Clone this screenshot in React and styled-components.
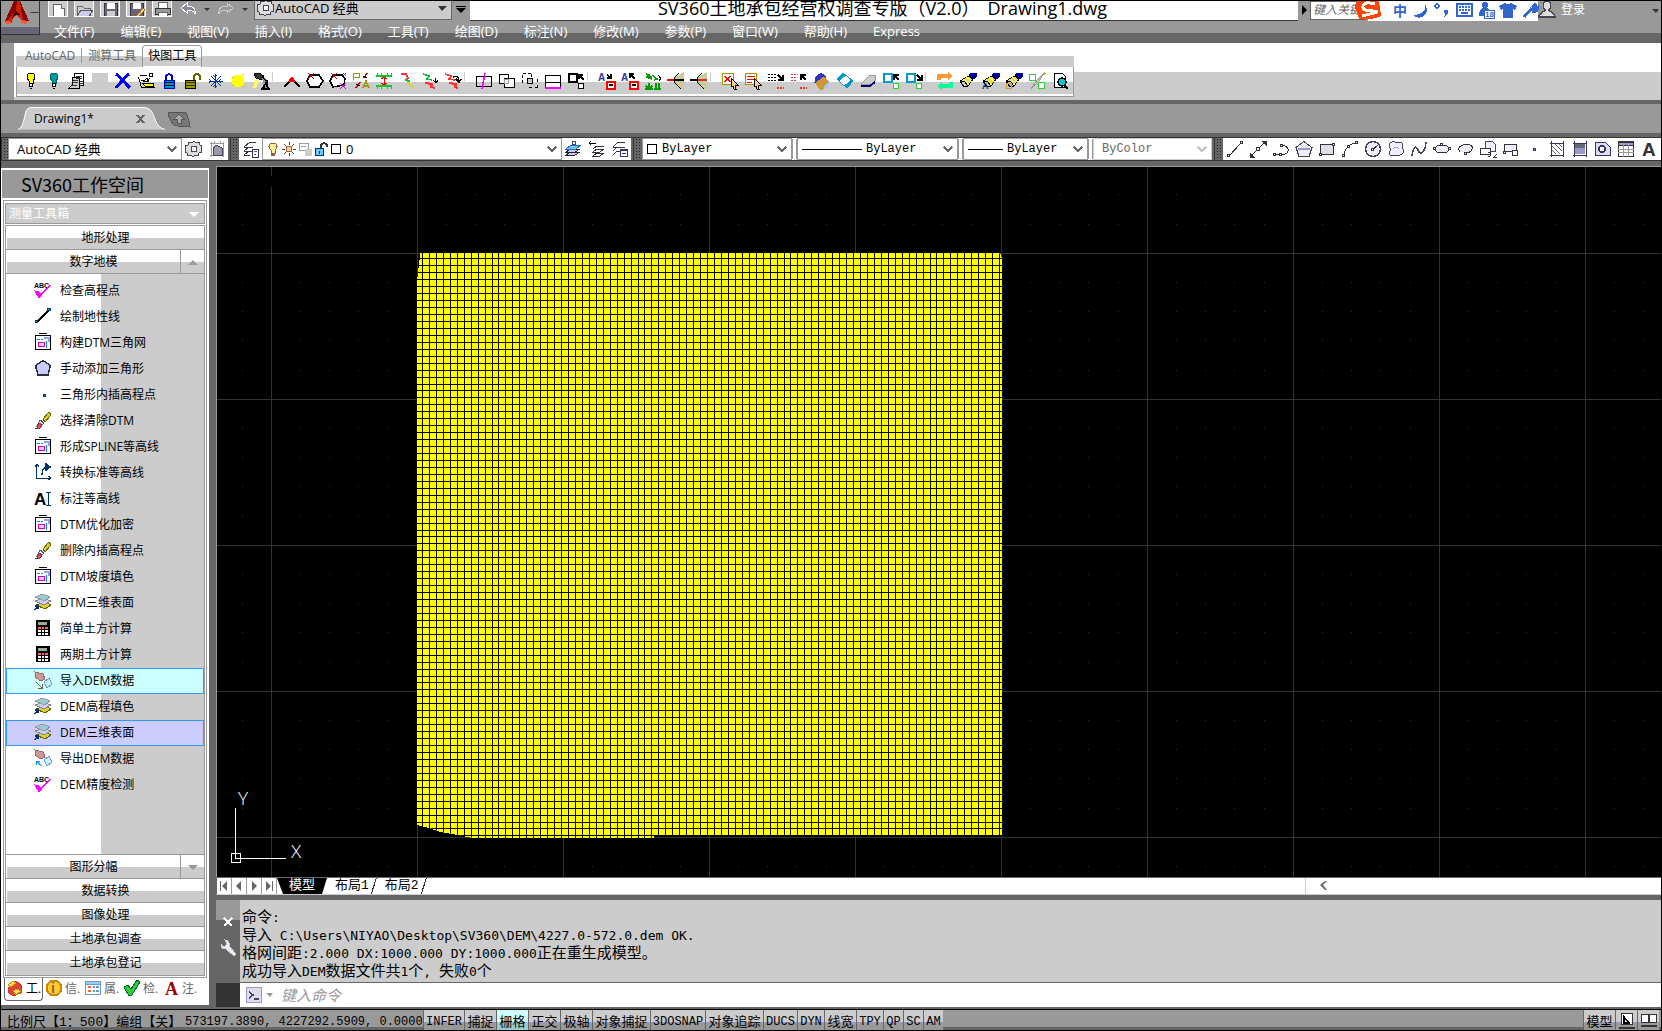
import { Fragment } from 'react';
import styled, { createGlobalStyle } from 'styled-components';

const UI = '"Open Sans", "Noto Sans CJK SC", sans-serif';
const MONO = '"Liberation Mono", "Noto Sans CJK SC", monospace';

const GlobalStyle = createGlobalStyle`
  * {
    box-sizing: border-box;
  }
  body {
    margin: 0;
    background: #000;
    font-family: ${UI};
    font-size: 12px;
    color: #000;
  }
  button, select, input {
    font: inherit;
    color: inherit;
    margin: 0;
    padding: 0;
    border: none;
    border-radius: 0;
    background: none;
  }
  select {
    appearance: none;
    outline: none;
  }
  svg {
    display: block;
    flex: none;
  }
`;

/* ---------- icons ---------- */

// every icon is a list of [d, stroke, fill, strokeWidth] or { t, x, y, s, c }
const page = [['M3.5 1.5h8l3 3v11h-11z', '#000', '#fff']];
const brush = [
  ['M12 1h5v4l-3 2-4-3z', '#009', '#009'],
  ['M10 4l4 3-5 7-4 1-4-6z', '#000', '#ccc'],
  ['M8 5l4 5M5 7l4 6', '#ff0', 'none', 2],
  ['M1 9h4l4 5', '#000'],
];

const icons = {
  newFile: [['M4 3h8l3 3v12H4z', '#666', '#fff'], ['M12 3v4h4', '#666', '#ccc']],
  open: [['M2 5h5l2 2h6v8H2z', '#666', '#ccc'], ['M2 15l4-6h12l-4 6z', '#556', '#cce']],
  save: [['M3 2h13v13H3z', '#334', '#667'], ['M6 2h7v5H6z', '#fff', '#fff'], ['M6 10h7v5H6z', '#ccc', '#ccc']],
  saveAs: [['M3 2h13v13H3z', '#334', '#667'], ['M6 2h7v5H6z', '#fff', '#fff'], ['M9 15l7-8 2 2-7 7z', '#963', '#fc6']],
  print: [['M5 1h9v6H5z', '#666', '#fff'], ['M2 7h15v6H2z', '#333', '#999'], ['M5 11h9v5H5z', '#666', '#fff']],
  undo: [['M2 7l6-5v3c5 0 9 2 8 8-1-3-4-4-8-4v3z', '#fff', '#889']],
  redo: [['M16 7l-6-5v3c-5 0-9 2-8 8 1-3 4-4 8-4v3z', '#ccc', '#999']],
  gear: [
    ['M9 1l2 2 3-1 1 3 2 1-1 3 1 3-3 1-1 3-3-1-2 2-2-2-3 1-1-3-2-1 1-3-1-3 3-1 1-3 3 1z', '#445', '#ddd'],
    ['M9 6a3 3 0 1 1 0 6a3 3 0 1 1 0-6', '#445', '#fff'],
  ],
  workspace: [['M2 3.500h14M2 15.500h14M3.500 2v15M15.500 2v15M6.500 1v3M12.500 1v3', '#999'], ['M5 9l3-4 6 3v7H5z', '#445', '#99a']],
  bulbOn: [['M9 1c5 0 5 5 2 8v2H7V9C4 6 4 1 9 1z', '#000', '#ff0'], ['M7.500 11.500h3v3h-3z', '#000', '#fff'], ['M8 16.500h2', '#000']],
  bulbOff: [['M9 1c5 0 5 5 2 8v2H7V9C4 6 4 1 9 1z', '#066', '#099'], ['M7.500 11.500h3v3h-3z', '#000', '#fff'], ['M8 16.500h2', '#000']],
  sheets: [
    ['M6.500 1.500h9v12h-9z', '#000', '#fff'],
    ['M4 5h7v11H1l3-3z', '#000', '#ccc'],
    ['M8 4.500h6M8 6.500h6M5 8.500h5M5 10.500h5M4 13.500h5M12 9.500h3M12 11.500h3', '#333'],
  ],
  blank: [['M1 1h16v10H1z', 'none', '#ccc']],
  cross: [['M2 2c4 3 8 8 14 14M15 2C10 6 6 11 2 16', '#00f', 'none', 3]],
  thaw: [
    ['M1.500 5l3 10.500h13M3 3.500h7M4 8l5 2M10 6l-3 3h4z', '#000'],
    ['M5 11l3 3h8v-3z', '#000', '#ff0'],
    ['M14 1a2 2 0 1 1 0 4a2 2 0 1 1 0-4', '#000', '#fff'],
    ['M13 6l-3 4', '#000'],
  ],
  lock: [['M6 8V4q3-4 6 0v4', '#00c', 'none', 1.5], ['M4 8h10v8H4z', '#00c', '#099'], ['M4 10.500h10M4 13.500h10', '#006']],
  unlock: [['M11 9V4q3-4 6 0v4', '#660', 'none', 2], ['M2 8h10v8H2z', '#000', '#990'], ['M2 10.500h10M2 13.500h10', '#330']],
  freeze: [['M9.500 2v14M3 9.500h14M5 4l10 10M15 4L5 14M9 5l-2-2M9 5l2-2M9 13l-2 2M9 13l2 2M5 9L3 7M5 9l-2 2M13 9l2-2M13 9l2 2', '#039']],
  sun: [['M9 3a6 6 0 1 1 0 12a6 6 0 1 1 0-12', '#ff0', '#ff0'], ['M3 5h2M13 3l2-1M3 14l2-1M14 14l2 1', '#cc3']],
  lamp: [
    ['M2 2l5-1 5 3-2 4-6-2z', '#000', '#333'],
    ['M3 7l4 1-3 8H1z', 'none', '#ff6'],
    ['M10 5l5 4-3 5v2M15 8v6l2 3h-7l2-3', '#000', '#999', 1.5],
  ],
  peak: [['M1 15l8-8 8 8', '#000', 'none', 1.5], ['M6 9l3-4 3 4z', '#f00', '#f00']],
  polyA: [['M1 9l3-6h9l4 6-4 6H4z', '#000', '#fff', 1.5], ['M2 1l6 6M8 1L2 7', '#c00']],
  polyB: [['M1 9l3-6h9l3 4-1 6-11 2z', '#000', '#fff', 1.5], ['M2 1l6 6M8 1L2 7', '#c00'], ['M11 11l6 6M17 11l-6 6M14 1l3 3M17 1l-3 3', '#c0c']],
  flags: [['M1.500 8V1.500h6v4h-6', '#990', 'none', 1.5], ['M11 16l3-7 3 7M12 14h4', '#990', 'none', 1.5], ['M15 1l-3 5M8 10l-4 6', '#c00', 'none', 1.5], ['M11 4l4 2M4 12l4 2', '#000']],
  spread: [['M1 4h16M1 14h16', '#0c3', 'none', 2], ['M2 1v3M6 1v3M12 1v3M16 1v3M2 14v3M6 14v3M12 14v3M16 14v3', '#0c3'], ['M9 5v8M6 7l3-2 3 2M6 11l3 2 3-2', '#f00']],
  zigA: [['M3 2h5l2 4-3 2', '#f33', 'none', 1.5], ['M7 8l5 1', '#0c3', 'none', 2], ['M11 11l4 5', '#dd0', 'none', 2]],
  zigB: [['M2 2l6 2-2 3 5 1', '#0b3', 'none', 1.5], ['M4 11l7 1-1 3 4 1', '#f33', 'none', 2], ['M14.500 6v5M12 8l3 3 2-3', '#000']],
  zigC: [['M1 2l6 2-2 3 6 1', '#f33', 'none', 1.5], ['M5 11l7 1-1 3 3 1', '#f33', 'none', 2], ['M9 5q6-2 6 4M12 7l3 3 2-3', '#000', 'none', 1.5]],
  rectCut: [['M1.500 4.500h15v10h-15z', '#000', 'none', 1.5], ['M10 1L7 17', '#f0f', 'none', 1.5]],
  union: [['M1.500 2.500h9v9h-9z', '#000', '#fff'], ['M6.500 6.500h10v9h-10z', '#000', '#fff'], ['M6.500 7.500h4v4h-4z', '#999', '#fff']],
  dashRect: [['M1.500 1.500h3m2 0h3m1 0v3M1.500 3v3m0 2v3M16.500 6.500v3m0 3v3h-3m-3 0h-3', '#000'], ['M6.500 6.500h5v5h-5z', '#000', '#ccc']],
  rectBase: [['M1.500 3.500h15v12h-15z', '#000', '#fff'], ['M1 15.500h16', '#f0f', 'none', 2], ['M1 10.500h16', '#000']],
  copyOut: [['M1.500 1.500h8v8h-8z', '#000', '#fff', 2], ['M11.500 11.500h5v5h-5z', '#000', '#fff'], ['M12 3l5 5M12 7V3h4', '#000', 'none', 1.5]],
  textIn: [{ t: 'A', x: 0, y: 9, s: 10, c: '#339', w: 700 }, ['M8.500 9.500h8v7h-8z', '#f00', '#fff', 2], ['M9 3l4 3M13 2v4h-4M11 13h4', '#000', 'none', 1.5]],
  textOut: [{ t: 'A', x: 0, y: 9, s: 10, c: '#339', w: 700 }, ['M8.500 9.500h8v7h-8z', '#f00', '#fff', 2], ['M9 2l5 5M9 6V2h4M11 13h4', '#000', 'none', 1.5]],
  grass: [['M2 5h6M5 2v5M2 2l6 5M9 3l4 5M10 8l4-1M2 14l3 3 3-3M5 11v6M1 17h8M12 11v6M15 11v6M10 17h7', '#090', 'none', 1.5], ['M14 3q4 3 1 6', '#000']],
  fanA: [['M16 1v16L7 11l1-5z', '#cc9', '#cc9'], ['M12 1L7 6v4l7 7', '#000'], ['M0 7.500h7', '#f00', 'none', 2], ['M7 7.500h10', '#000', 'none', 2]],
  fanB: [['M16 1v16L7 11l1-5z', '#cc9', '#cc9'], ['M12 1L7 6v4l7 7', '#000'], ['M0 7.500h8', '#000', 'none', 2], ['M8 7.500h9', '#c33', 'none', 2]],
  pickX: [['M1.500 1.500h11v11h-11z', '#990', '#fff', 1.5], ['M4 4l5 6M9 4l-5 6', '#f00', 'none', 1.5], ['M10 6l7 7-3 0 1 4-2 0-1-3-2 1z', '#000', '#fc9']],
  pickList: [['M1.500 1.500h11v11h-11z', '#990', '#fff', 1.5], ['M3 4.500h8M3 7.500h8M3 10.500h5', '#f00'], ['M10 6l7 7-3 0 1 4-2 0-1-3-2 1z', '#000', '#fc9']],
  dotsIn: [['M1 2.500h2m1 0h2m1 0h2M1 5.500h2m1 0h2m1 0h2M1 8.500h2m1 0h2m1 0h2', '#000'], ['M11 3l5 5M16 3v5h-5', '#000', 'none', 1.5], ['M10 16h2m1 0h2m1 0h1', '#f33', 'none', 1.5]],
  dotsOut: [['M1 2.500h2m1 0h2m1 0h1M1 5.500h2m1 0h2M1 8.500h2m1 0h2', '#c33'], ['M11 3l5 5M11 8V3h5', '#000', 'none', 1.5], ['M10 16h2m1 0h2m1 0h1', '#f33', 'none', 1.5]],
  eraseA: [['M3 5l5-4 5 4-6 5H2z', '#33c', '#33c'], ['M3 11l8-6 5 5-6 7H7z', '#c93', '#c93'], ['M11 16l5-5', '#9cf', 'none', 2]],
  eraseB: [['M1 7l6-6 10 8-6 7z', '#09c', '#09c'], ['M4 9l6-5 4 4-6 5z', '#fff', '#fff']],
  rubber: [['M2 12l9-9h5v6l-5 4z', '#999', '#ccc'], ['M2 14h9l5-4', '#006', 'none', 2]],
  boxOut: [['M1.500 1.500h8v8h-8z', '#09c', '#fff', 2], ['M12 3l5 5M12 8V3h5', '#000', 'none', 1.5], ['M11.500 11.500h5v5h-5z', '#3c3', '#fff']],
  boxIn: [['M1.500 1.500h8v8h-8z', '#09c', '#fff', 2], ['M12 3l5 5M17 3v5h-5', '#000', 'none', 1.5], ['M11.500 11.500h5v5h-5z', '#3c3', '#fff']],
  swap: [['M1 8V2h11V0l5 4-5 4V6H5v2z', 'none', '#f93'], ['M17 10v6H6v2l-5-4 5-4v2h7v-2z', 'none', '#0f9']],
  brushA: brush,
  brushB: [...brush, { t: 'A', x: 0, y: 17, s: 9, c: '#036', w: 700 }],
  brushC: [...brush, ['M4 11a3 3 0 1 1 0 6a3 3 0 1 1 0-6', '#c93']],
  swapBox: [['M1.500 2.500h6v6h-6z', '#3c3', '#fff', 1.5], ['M16 1l-5 8-8 8 6-9z', '#999', '#ccc'], ['M10.500 10.500h6v6h-6z', '#3c3', '#fff', 1.5], ['M15 3l2-2', '#c93', 'none', 2]],
  preview: [...page, ['M11 6a4 4 0 1 1 0 8a4 4 0 1 1 0-8', '#000', '#0cc', 1.5], ['M13 13l4 4', '#000', 'none', 2]],
  // properties bar
  layerProps: [['M2 7l6-5h6M2 11l5-4h4M2 15l5-4h3M2 7.500h6M2 11.500h6M2 15.500h6', '#334'], ['M10.500 9.500h6v8h-6z', '#334', '#fff'], ['M12 11.500h3M12 14.500h2', '#36c']],
  layerA: [['M1 15l5-3h9l-5 3zM1 12l5-3h9l-5 3z', '#223', '#cce'], ['M1 9l5-4h10l-5 4z', '#36c', '#6cf'], ['M9 1a2 2 0 1 1 0 4a2 2 0 1 1 0-4', '#445', '#fff']],
  layerB: [['M5 16l4-3h7l-4 3zM5 12l4-3h7l-4 3zM5 9l4-3h7', '#334', '#fff'], ['M1 3.500h7M3 1L1 3l2 2', '#000']],
  layerC: [['M2 7l5-5h7M2 11l4-4h8M2 15l4-4h3M2 7.500h6', '#334'], ['M9.500 9.500h7v7h-7z', '#336', '#fff'], ['M9 10.500h8M11 13.500h4', '#336', 'none', 1.5]],
  smallBulb: [['M7 1c5 0 5 5 2 7v3H5V8C2 6 2 1 7 1z', '#963', '#fe9'], ['M5 12.500h4', '#666', 'none', 2]],
  smallSun: [['M7 4a3 3 0 1 1 0 6a3 3 0 1 1 0-6', '#963', '#fc9'], ['M7.500 0v3M7.500 11v3M0 7.500h3M11 7.500h3M2 2l2 2M10 10l2 2M12 2l-2 2M4 10l-2 2', '#633']],
  smallVp: [['M1.500 1.500h9v7h-9z', '#999', '#fff'], ['M7 7h6v6H7z', '#ccc', '#ccc'], ['M3 4.500h5', '#999']],
  smallLock: [['M7 6V3q3-4 6 0v2', '#333', 'none', 1.5], ['M1.500 6.500h8v7h-8z', '#036', '#6cf'], ['M5.500 9v3', '#036']],
  smallBox: [['M1.500 2.500h9v9h-9z', '#000', '#fff']],
  // draw bar
  line: [['M3 16L15 3', '#333'], ['M1.500 14.500h2v2h-2zM14.500 1.500h2v2h-2z', '#333', '#fff']],
  xline: [['M2 16L16 2', '#333'], ['M1 17v-4l4 4zM17 1v4l-4-4z', '#333', '#333'], ['M7.500 7.500h3v3h-3z', '#333', '#fff']],
  pline: [['M2 14.500h9c8-1 6-9-1-9H9', '#333'], ['M1.500 13.500h2v2h-2zM7.500 13.500h2v2h-2zM8.500 4.500h2v2h-2z', '#333', '#fff']],
  pentagon: [['M9 1.500l8 6-3 9H4l-3-9z', '#444', '#eef'], ['M3 9h12', '#99c', 'none', 2]],
  rect: [['M2.500 4.500h13v10h-13z', '#333', '#dde'], ['M1.500 13.500h2v2h-2zM14.500 3.500h2v2h-2z', '#333', '#fff']],
  arc: [['M3 15C4 8 8 4 15 3', '#333'], ['M1.500 14.500h2v2h-2zM6.500 5.500h2v2h-2zM14.500 1.500h2v2h-2z', '#333', '#fff']],
  circle: [['M9 1.500a7.500 7.500 0 1 1 0 15a7.500 7.500 0 1 1 0-15', '#445', '#eef', 1.5], ['M8 10l6-5', '#333'], ['M7.500 8.500h2v2h-2z', '#333', '#fff']],
  cloud: [['M5 2c3-1 4 1 4 1s7-3 7 2c0 3-1 3-1 3s3 2 1 5-6 2-6 2-7 3-8-2c0-2 2-3 2-3S0 3 5 2z', '#445', '#eef'], ['M6 9q3-3 6 0', '#99c']],
  spline: [['M2 16C4 0 8 10 9 12s6 2 7-10', '#445', 'none', 1.5]],
  ellipse: [['M9 5c9 0 9 8 0 8s-9-8 0-8', '#333', '#eef'], ['M0.500 7.500h2v2h-2zM15.500 7.500h2v2h-2zM7.500 3.500h2v2h-2z', '#333', '#fff']],
  ellArc: [['M4 12C-2 3 19 2 16 9c-1 3-4 4-7 4', '#333', '#eef'], ['M8.500 12.500h2v2h-2z', '#333', '#fff']],
  insert: [['M6.500 1.500h7l3 3v7h-10z', '#446', '#eef'], ['M1.500 8.500h10v6h-10z', '#333', '#fff'], ['M9 12a2 2 0 1 1 0 5M15 17h3v-3z', '#333']],
  block: [['M2.500 4.500h12v7h-12z', '#333', '#eef'], ['M13 10a3 3 0 1 1 0 6a3 3 0 1 1 0-6', '#333', '#fff'], ['M1.500 11.500h2v2h-2z', '#333', '#fff']],
  point: [['M8.500 8.500h2v2h-2z', '#336', '#99c']],
  hatch: [['M2 3.500h14M2 15.500h14M3.500 1v16M15.500 1v16', '#336'], ['M4 6l8 8M4 10l4 4M7 4l7 7M11 4l3 3', '#667']],
  gradient: [['M4 4h10v10H4z', 'none', '#99c'], ['M4 4h10v4H4z', 'none', '#667'], ['M2 3.500h14M2 15.500h14M3.500 1v16M15.500 1v16', '#336']],
  region: [['M1.500 2.500h10l5 5v8h-15z', '#336', '#dde'], ['M8 6a3 3 0 1 1 0 6a3 3 0 1 1 0-6', '#336', '#fff', 1.5]],
  table: [['M1.500 1.500h15v15h-15z', '#333', '#fff'], ['M1.500 2.500h15v3h-15z', '#333', '#99c'], ['M1 9.500h16M1 12.500h16M6.500 5v12M11.500 5v12', '#999']],
  mtext: [{ t: 'A', x: 2, y: 16, s: 19, c: '#333', w: 700 }],
  // work space list
  check: [{ t: 'ABC', x: 0, y: 7, s: 7, c: '#000', w: 700 }, ['M2 12l4 3 10-11', '#f0f', 'none', 1.5], ['M1 10l4 1 3 3-3 3z', '#f0f', '#f0f']],
  segment: [['M3 15L15 3', '#000', 'none', 1.5], ['M1.500 13.500h2v2h-2zM13.500 1.500h3v2h-3z', '#036', '#09c']],
  panel: [['M1.500 2.500h15v14h-15z', '#000', '#fff'], ['M5 0.500h8', '#000'], ['M4.500 9.500h6v4h-6z', '#c0c', '#fcf'], ['M3 6h3m1 0h2M12.500 8v7', '#099'], ['M10 5h5v4', '#99f', 'none', 2]],
  poly: [['M9 1.500l7.500 5-2.500 9.500H4L1.500 6.500z', '#233', '#ccf', 1.5]],
  dot: [['M9 9h2v2H9z', '#036', '#09c']],
  paint: [['M9 8l6-7 2 3-6 7z', '#660', '#dc3'], ['M6 9l4 3-3 3H3z', '#556', '#eef'], ['M5 12l3 2-2 3H3z', '#933', '#c66'], ['M1 17h3', '#333']],
  axis: [['M2.500 2v13.500h14M1 4l2-3 2 3M14 13l3 2-3 2', '#036'], ['M8 12c0-5 1-8 6-8M12 1l4 3-4 3z', '#036', 'none', 1.5]],
  label: [{ t: 'A', x: 0, y: 16, s: 17, c: '#000', w: 700 }, ['M12 3.500h5M14.500 3v13M12 16.500h5', '#036']],
  surface: [
    ['M2 12l8-3 7 3-6 4z', '#660', '#dc3'],
    ['M1 8l8-3 8 3-7 4z', '#889', '#cce'],
    ['M1 4l8-3 7 3-6 4z', '#99a', '#9cc'],
    ['M1 17l3-4M1 13h3v3', '#036', 'none', 1.5],
  ],
  calc: [['M2 1h14v16H2z', 'none', '#000'], ['M4 4h9', '#9a9', 'none', 3], ['M4 9h3m1 0h2m1 0h3', '#f66', 'none', 2], ['M4 12h3m1 0h2m1 0h3M4 15h3m1 0h2m1 0h3', '#fff', 'none', 2]],
  importData: [['M1 1l8 2 2 5-4 2-5-3z', '#966', '#c99'], ['M10 11l5-4 3 6-5 4z', '#69c', '#cef'], ['M2 11l6 6M8 13v4H4', '#663']],
  exportData: [['M1 1l8 2 2 5-4 2-5-3z', '#966', '#c99'], ['M10 11l5-4 3 6-5 4z', '#69c', '#cef'], ['M8 17l-6-5M2 16v-4h4', '#09f']],
  toolbox: [['M2 9l8-7 6 5-1 7-8 3-5-4z', '#c33', '#d43'], ['M2 6l5-4 3 2-5 4zM7 12l4-2 4 2-5 4z', '#c90', '#fd6']],
  info: [['M9 1.500a7.500 7.500 0 1 1 0 15a7.500 7.500 0 1 1 0-15', '#c80', '#fc3', 2], { t: 'i', x: 6, y: 14, s: 14, c: '#963', w: 700 }],
  props: [['M1.500 2.500h15v13h-15z', '#69c', '#fff'], ['M1.500 2.500h15v3h-15z', '#69c', '#9cf'], ['M4 8h3M4 12h3', '#f63', 'none', 2], ['M9 8h2m1 0h3M9 12h2m1 0h3', '#69c', 'none', 2]],
  tick: [['M1 8l4-2 3 4 6-9 3 2-8 13-3 1z', '#063', '#3c3']],
  note: [{ t: 'A', x: 3, y: 16, s: 18, c: '#900', w: 700, f: 'Liberation Serif' }],
  // title bar
  logo: [
    ['M11 0h6l9 20-4 3-4-1 0-4-5-4-3 3-1 5-6 1-1-3z', 'none', '#c20'],
    ['M11 0h3l-1 9-7 9-4 2zM17 0l9 20-4 3-3-8z', 'none', '#800'],
    ['M13 9l4 5-4 0-4 3z', 'none', '#400'],
    ['M2 20h4l3 2-6 1zM18 19l8 1-4 3-4-1z', 'none', '#f53'],
  ],
  moon: [['M13 2q5 11-11 12 5 5 11 1 6-6 0-13z', 'none', '#36c']],
  comma: [['M4 3a2 2 0 1 1 0 4a2 2 0 1 1 0-4', '#36c', 'none', 1.5], ['M11 9h4q1 5-4 7 2-3 0-4z', 'none', '#36c']],
  keyboard: [['M2 3h15v12H2z', '#36c', '#fff', 2], ['M4 6h2m1 0h2m1 0h2m1 0h2M4 9h2m1 0h2m1 0h2m1 0h2M6 12h7', '#36c', 'none', 2]],
  person: [['M8 1a3 3 0 1 1 0 6a3 3 0 1 1 0-6M2 15q0-8 6-8t6 8z', 'none', '#36c'], ['M7 9h10v8H7z', '#36c', '#fff'], { t: '18', x: 8, y: 16, s: 8, c: '#36c', w: 700 }],
  shirt: [['M6 2q3 3 6 0l6 3-2 4-2-1v9H4V8L2 9 0 5z', 'none', '#36c']],
  wrench: [['M3 16l8-9M15 3l-3 3 1 2 4-2q-1 6-6 4', '#36c', 'none', 3]],
  user: [['M9 1c5 0 4 8 2 9 0 2 6 2 6 7H1c0-5 6-5 6-7C5 9 4 1 9 1z', '#445', '#ddd', 1.5]],
  sogou: [['M2 2Q14-3 25 1l2 15q-12 5-22 3L1 6z', 'none', '#f40'], ['M21 4Q10 1 9 6t10 5-11 5', '#fff', 'none', 3]],
  plus: [['M2 2h17q4 5 5 15-11 0-16-2-5-5-6-13z', '#555', '#777'], ['M13 4l5 5h-3v4h-4v-4H8z', '#555', '#aaa']],
  close: [['M5 5l7 8M12 5l-7 8', '#666', 'none', 2]],
  closeWhite: [['M5 5l8 8M13 5l-8 8', '#fff', 'none', 2]],
  spanner: [['M2 5q0 5 5 5l8 7 2-2-7-8q1-5-4-6l2 4-3 3z', '#ccc', '#eef']],
  prompt: [['M1.500 1.500h15v15h-15z', '#99c', '#dde'], ['M4 6l4 3-4 3M9 13h5', '#445', 'none', 1.5]],
  layoutA: [['M3.500 1.500h11v11h-11z', '#333', '#fff'], ['M6 5v6h5z', '#000', 'none', 1.5], ['M1 16h16', '#333', 'none', 2]],
  layoutB: [['M1.500 2.500h7v8h-7zM9.500 2.500h7v8h-7z', '#333', '#fff'], ['M1 14h16', '#333', 'none', 2]],
  chevron: [['M5 7l4 4 4-4', '#666', 'none', 2]],
};

const Icon = ({ name, w = 18, h = 18 }) => (
  <svg width={w} height={h} viewBox={`0 0 ${w} ${h}`} shapeRendering="crispEdges" aria-hidden="true">
    {icons[name].map((p, i) =>
      p.t ? (
        <text key={i} x={p.x} y={p.y} fontSize={p.s} fill={p.c} fontWeight={p.w} fontFamily={p.f || 'Liberation Sans'}>
          {p.t}
        </text>
      ) : (
        <path key={i} d={p[0]} stroke={p[1] || 'none'} fill={p[2] || 'none'} strokeWidth={p[3] || 1} />
      )
    )}
  </svg>
);

/* ---------- window ---------- */

const Window = styled.div`
  display: flex;
  flex-direction: column;
  height: 100vh;
  min-height: 700px;
  border: 1px solid #000;
  background: #666;
  overflow: hidden;
`;

const Header = styled.header`
  display: flex;
  height: 42px;
  flex: none;
  background: linear-gradient(#999 32px, #666 32px);
`;

const LogoButton = styled.button`
  display: flex;
  align-items: flex-start;
  width: 39px;
  height: 34px;
  flex: none;
  padding-left: 2px;
  border: 1px solid #333;
  border-width: 0 1px 1px 0;
  background: linear-gradient(#999 26px, #667 26px);
`;

const HeaderRows = styled.div`
  flex: 1;
  min-width: 0;
`;

const TitleRow = styled.div`
  display: flex;
  height: 20px;
`;

const QuickAccess = styled.div`
  display: flex;
  align-items: flex-start;
  padding-left: 8px;
`;

const QuickButton = styled.button`
  display: grid;
  place-items: center;
  width: ${props => props.$width || 20}px;
  height: 16px;
  overflow: hidden;
  border: ${props => (props.$framed ? '1px solid #fff' : 'none')};
  border-top: none;
  margin-right: ${props => (props.$framed ? '6px' : 0)};
  background: ${props => (props.$framed ? '#ccc' : 'none')};
`;

const QuickSelect = styled.label`
  display: flex;
  align-items: center;
  width: 198px;
  height: 19px;
  padding: 0 2px 5px;
  border: 1px solid #666;
  border-top: none;
  background: #ccc;

  select {
    flex: 1;
    font-size: 13px;
    line-height: 14px;
  }
`;

const Caption = styled.div`
  flex: 1;
  display: flex;
  align-items: flex-start;
  gap: 8px;
  padding-left: 188px;
  background: #fff;
  border-bottom: 1px solid #333;
  font-size: 18px;
  line-height: 14px;
  white-space: nowrap;
`;

const SearchBox = styled.input`
  width: 54px;
  height: 19px;
  padding: 0 2px 3px;
  border: 1px solid #666;
  background: #fff;
  font-size: 12px;
  font-style: italic;

  &::placeholder {
    color: #666;
    opacity: 1;
  }
`;

// floats over the end of the search box
const InputMethod = styled.div`
  display: flex;
  align-items: center;
  gap: 4px;
  position: relative;
  height: 20px;
  width: 184px;
  margin-left: -10px;
  padding-bottom: 2px;
  background: linear-gradient(90deg, transparent 14px, #fff 14px);
  color: #36c;
  font-size: 14px;
  font-weight: 700;
`;

const Login = styled.button`
  display: flex;
  align-items: center;
  gap: 5px;
  padding-bottom: 4px;
  color: #fff;
`;

const Spacer = styled.div`
  flex: ${props => (props.$size ? 'none' : 1)};
  width: ${props => props.$size || 0}px;
`;

const MenuBar = styled.nav`
  display: flex;
  align-items: center;
  gap: 26px;
  height: 22px;
  padding: 2px 0 4px 14px;
  color: #fff;
  font-size: 13px;

  button {
    white-space: nowrap;
    line-height: 16px;
  }
`;

/* ---------- tool ribbon ---------- */

const Ribbon = styled.section`
  display: flex;
  height: 57px;
  flex: none;
  padding-left: 13px;
  background: linear-gradient(90deg, #999 13px, transparent 13px), linear-gradient(#fff 29px, #ccc 29px);
`;

const RibbonPanel = styled.div`
  padding-left: 2px;
  background: #fff;
  border-bottom: 3px solid #ccc;
  border-radius: 6px 0 0 0;
`;

const RibbonTabs = styled.div`
  display: flex;
  align-items: flex-end;
  height: 24px;
  background: linear-gradient(#fff 13px, #ccc 13px);
`;

const RibbonTab = styled.button`
  height: 22px;
  padding: 0 5px 2px;
  line-height: 18px;
  color: ${props => (props.$active ? '#000' : '#666')};
  background: ${props => (props.$active ? 'linear-gradient(#fff 11px, #ccc 11px, #ccc 20px, #fff 20px)' : 'none')};
  border: 1px solid ${props => (props.$active ? '#999' : 'transparent')};
  border-bottom: none;
  border-radius: 4px 4px 0 0;
`;

const TabDivider = styled.span`
  width: 1px;
  height: 15px;
  margin-bottom: 4px;
  background: #999;
`;

const ToolStrip = styled.div`
  display: flex;
  align-items: center;
  height: 30px;
  padding: 0 2px 2px 2px;
  border: 1px solid #999;
  border-width: 0 1px 1px 1px;
  background: linear-gradient(#fff 15px, #ccc 15px, #ccc 27px, #fff 27px);
`;

const ToolButton = styled.button`
  display: grid;
  place-items: center;
  width: 23px;
  height: 22px;
  flex: none;
`;

const ToolDivider = styled.span`
  width: 8px;
  height: 9px;
  margin-bottom: 8px;
  border-left: 1px solid #ccc;
`;

/* ---------- document tabs ---------- */

const DocumentTabs = styled.div`
  display: flex;
  align-items: center;
  height: 29px;
  flex: none;
  margin: 4px 0;
  padding: 0 17px;
  background: #999;
`;

const DocumentTab = styled.div`
  display: flex;
  align-items: center;
  justify-content: space-between;
  position: relative;
  width: 148px;
  height: 23px;
  padding: 0 16px;

  > svg {
    position: absolute;
    inset: 0;
  }
  button {
    position: relative;
    line-height: 18px;
  }
`;

/* ---------- properties bar ---------- */

const PropertyBar = styled.div`
  display: flex;
  height: 24px;
  flex: none;
  border: 1px solid #333;
  border-width: 1px 0;
  background: #666;
`;

const Grip = styled.span`
  width: ${props => props.$size || 8}px;
  flex: none;
  border-left: 1px solid #333;
  background: radial-gradient(#222 1px, transparent 1px) 1px 0 / 3px 3px #666;
`;

const BarGroup = styled.div`
  display: flex;
  align-items: center;
  background: #fff;
  flex: ${props => (props.$grow ? 1 : 'none')};
  margin-right: ${props => (props.$grow ? 0 : '2px')};
`;

const Combo = styled.label`
  display: flex;
  align-items: center;
  gap: ${props => (props.$tight ? 2 : 4)}px;
  width: ${props => props.$width}px;
  height: 22px;
  padding-left: ${props => props.$indent || 4}px;
  border: 1px solid ${props => (props.$disabled ? '#ccc' : '#999')};
  background: #fff;
  color: ${props => (props.$disabled ? '#666' : '#000')};
  font-family: ${props => (props.$mono ? MONO : UI)};
  font-size: ${props => (props.$mono ? '12px' : '13px')};

  select {
    flex: 1;
    min-width: 0;
    opacity: 1;
  }
  select:disabled + svg {
    opacity: 0.4;
  }
`;

const ComboRule = styled.span`
  width: ${props => props.$size}px;
  height: 1px;
  background: #000;
`;

const BarDivider = styled.span`
  width: 5px;
  height: 20px;
  border: 1px solid #999;
  border-width: 0 1px;
`;

/* ---------- sidebar ---------- */

const Workspace = styled.main`
  display: flex;
  flex: 1;
  min-height: 0;
  padding-top: 5px;
`;

const Sidebar = styled.aside`
  display: flex;
  flex-direction: column;
  width: 208px;
  flex: none;
  margin: 2px 7px 4px 0;
  padding: 2px 1px 0;
  background: #fff;
`;

const SidebarTitle = styled.h2`
  display: flex;
  align-items: center;
  height: 28px;
  flex: none;
  margin: 0 0 2px;
  padding-left: 19px;
  background: #999;
  font-size: 18px;
  font-weight: 400;
  font-family: "Noto Sans CJK SC", sans-serif;
`;

const SidebarBox = styled.div`
  display: flex;
  flex-direction: column;
  gap: 1px;
  flex: 1;
  min-height: 0;
  margin: 0 1px;
  padding: 2px 1px 1px;
  border: 1px solid #999;
`;

const ToolboxSelect = styled.label`
  display: flex;
  align-items: center;
  height: 21px;
  flex: none;
  padding: 0 4px 0 3px;
  border: 1px solid #999;
  background: #ccc;
  color: #fff;

  select {
    flex: 1;
  }
`;

const Accordion = styled.div`
  display: flex;
  flex-direction: column;
  flex: 1;
  min-height: 0;
  border: 1px solid #999;
`;

const Group = styled.div`
  display: flex;
  height: 24px;
  flex: none;
  border-bottom: 1px solid #999;

  &:last-child {
    border-bottom: none;
  }
`;

const GroupButton = styled.button`
  flex: 1;
  line-height: 22px;
  border: 1px solid #fff;
  border-width: 0 0 0 1px;
  background: linear-gradient(#fff 12px, #ccc 12px);
`;

const GroupScroll = styled.button`
  display: grid;
  place-items: center;
  width: 24px;
  border-left: 1px solid #999;
  background: linear-gradient(#fff 12px, #ccc 12px);
`;

const TaskList = styled.ul`
  flex: 1;
  min-height: 0;
  margin: 0;
  padding: 4px 0 0;
  overflow: hidden;
  list-style: none;
  background: linear-gradient(90deg, #fff 95px, #ccc 95px);
  border-bottom: 1px solid #999;
`;

const tones = { hover: '#cff', active: '#ccf' };

const Task = styled.button`
  display: flex;
  align-items: center;
  gap: 8px;
  width: 100%;
  height: 26px;
  padding: 0 0 2px 27px;
  border: 1px solid ${props => (props.$tone ? '#39f' : 'transparent')};
  background: ${props => tones[props.$tone] || 'none'};
  text-align: left;
  white-space: nowrap;
`;

const SidebarTabs = styled.div`
  display: flex;
  height: 27px;
  flex: none;
  padding-left: 2px;
`;

const SidebarTab = styled.button`
  display: flex;
  align-items: center;
  gap: 2px;
  width: 39px;
  height: 23px;
  padding: 0 0 2px 1px;
  color: ${props => (props.$active ? '#000' : '#666')};
  border: 1px solid ${props => (props.$active ? '#666' : 'transparent')};
  border-top: none;
  border-radius: 0 0 4px 4px;
`;

/* ---------- drawing ---------- */

const Stage = styled.section`
  display: flex;
  flex-direction: column;
  flex: 1;
  min-width: 0;
`;

const Canvas = styled.div`
  display: flex;
  flex: 1;
  min-height: 0;
  border: 1px solid #999;
  border-width: 1px 0 0 1px;
  background: #000;
  overflow: hidden;
`;

const LayoutTabs = styled.div`
  display: flex;
  height: 18px;
  flex: none;
  border: 1px solid #666;
  border-width: 1px 0 0 1px;
  border-bottom: 1px solid #ccc;
  background: #fff;
`;

const StepButton = styled.button`
  display: grid;
  place-items: center;
  width: 15px;
  border-right: 1px solid #999;
`;

const LayoutTab = styled.button`
  padding: 0 ${props => (props.$active ? 12 : 8)}px;
  font-family: ${MONO};
  font-size: 13px;
  line-height: 16px;
  color: ${props => (props.$active ? '#fff' : '#000')};
  background: ${props => (props.$active ? '#000' : 'linear-gradient(108deg, transparent calc(100% - 6px), #333 calc(100% - 6px), #333 calc(100% - 5px), transparent calc(100% - 5px))')};
  clip-path: ${props => (props.$active ? 'polygon(0 0, 100% 0, calc(100% - 5px) 100%, 6px 100%)' : 'none')};
`;

const ScrollTrack = styled.div`
  width: 356px;
  padding-left: 11px;
  border-left: 1px solid #ccc;
`;

/* ---------- command line ---------- */

const CommandPanel = styled.section`
  display: flex;
  height: 107px;
  flex: none;
  margin: 5px 0 2px;
`;

const CommandRail = styled.div`
  display: flex;
  flex-direction: column;
  align-items: center;
  gap: 8px;
  width: 24px;
  padding-top: 13px;
  background: linear-gradient(#999 20px, #666 20px, #666 83px, #333 83px);
`;

const CommandBody = styled.div`
  display: flex;
  flex-direction: column;
  flex: 1;
  min-width: 0;
`;

const History = styled.div`
  flex: 1;
  padding: 8px 0 0 2px;
  background: #ccc;
  border-bottom: 1px solid #666;
  font-family: "DejaVu Sans Mono", monospace;
  font-size: 13px;
`;

const HistoryLine = styled.p`
  height: 18px;
  margin: 0;
  line-height: 18px;
  white-space: pre;

  span {
    font-family: "Noto Sans CJK SC", sans-serif;
    font-size: 15px;
    line-height: 1;
  }
`;

const Prompt = styled.label`
  display: flex;
  align-items: center;
  height: 24px;
  padding-left: 5px;
  background: #fff;

  input {
    flex: 1;
    outline: none;
    font-size: 15px;
    font-style: italic;
  }
  input::placeholder {
    color: #999;
    opacity: 1;
  }
`;

/* ---------- status bar ---------- */

const StatusBar = styled.footer`
  display: flex;
  height: 21px;
  flex: none;
  padding-right: 2px;
  border-top: 1px solid #000;
  background: linear-gradient(#999 17px, #666 17px);
  font-family: ${MONO};
  white-space: nowrap;
`;

const StatusText = styled.span`
  width: ${props => props.$width}px;
  height: 20px;
  padding: 5px 0 0 6px;
  font-size: ${props => (props.$coords ? '12px' : '13px')};
  line-height: 15px;
`;

const StatusToggle = styled.button`
  width: ${props => props.$width}px;
  height: 20px;
  flex: none;
  display: grid;
  place-items: center;
  border-left: 1px solid #666;
  background: ${props => (props.$on ? 'linear-gradient(#cff 12px, #9cc 12px)' : 'linear-gradient(#ccc 12px, #99c 12px, #99c 13px, #999 13px)')};
  font-size: ${props => (props.$cjk ? '13px' : '12px')};
  line-height: 15px;
  padding-top: ${props => (props.$glyph ? 1 : 5)}px;
`;

/* ---------- data ---------- */

const menus = ['文件(F)', '编辑(E)', '视图(V)', '插入(I)', '格式(O)', '工具(T)', '绘图(D)', '标注(N)', '修改(M)', '参数(P)', '窗口(W)', '帮助(H)', 'Express'];

const toolGroups = [
  ['bulbOn', 'bulbOff', 'sheets', 'blank', 'cross', 'thaw', 'lock', 'unlock', 'freeze', 'sun', 'lamp'],
  ['peak', 'polyA', 'polyB', 'flags', 'spread', 'zigA', 'zigB', 'zigC'],
  ['rectCut', 'union', 'dashRect', 'rectBase', 'copyOut'],
  ['textIn', 'textOut', 'grass', 'fanA', 'fanB'],
  ['pickX', 'pickList', 'dotsIn', 'dotsOut', 'eraseA', 'eraseB', 'rubber', 'boxOut', 'boxIn'],
  ['swap', 'brushA', 'brushB', 'brushC', 'swapBox', 'preview'],
];

const drawTools = ['line', 'xline', 'pline', 'pentagon', 'rect', 'arc', 'circle', 'cloud', 'spline', 'ellipse', 'ellArc', 'insert', 'block', 'point', 'hatch', 'gradient', 'region', 'table', 'mtext'];

const tasks = [
  ['check', '检查高程点'],
  ['segment', '绘制地性线'],
  ['panel', '构建DTM三角网'],
  ['poly', '手动添加三角形'],
  ['dot', '三角形内插高程点'],
  ['paint', '选择清除DTM'],
  ['panel', '形成SPLINE等高线'],
  ['axis', '转换标准等高线'],
  ['label', '标注等高线'],
  ['panel', 'DTM优化加密'],
  ['paint', '删除内插高程点'],
  ['panel', 'DTM坡度填色'],
  ['surface', 'DTM三维表面'],
  ['calc', '简单土方计算'],
  ['calc', '两期土方计算'],
  ['importData', '导入DEM数据', 'hover'],
  ['surface', 'DEM高程填色'],
  ['surface', 'DEM三维表面', 'active'],
  ['exportData', '导出DEM数据'],
  ['check', 'DEM精度检测'],
];

const sidebarTabs = [['toolbox', '工.'], ['info', '信.'], ['props', '属.'], ['tick', '检.'], ['note', '注.']];

const history = [
  '命令:',
  '导入 C:\\Users\\NIYAO\\Desktop\\SV360\\DEM\\4227.0-572.0.dem OK.',
  '格网间距:2.000 DX:1000.000 DY:1000.000正在重生成模型。',
  '成功导入DEM数据文件共1个, 失败0个',
];

const toggles = ['INFER', '捕捉', '栅格', '正交', '极轴', '对象捕捉', '3DOSNAP', '对象追踪', 'DUCS', 'DYN', '线宽', 'TPY', 'QP', 'SC', 'AM'];

const isCjk = text => /[\u4e00-\u9fff]/.test(text);
const toggleWidth = text => (isCjk(text) ? text.length * 13 : text.length * 7) + 6;

/* ---------- parts ---------- */

const CELL = 146 / 21;
const outline =
  'M203 86H782L784 88 785 92V669H437V671H256L245 669 235 667 223 665 215 662 208 660 200 658V110H201V101H202V93H203Z';

const meshLines = () => {
  let d = '';
  for (let i = 0; i < 84; i += 1) {
    d += `M${Math.round(205 + i * CELL)} 86h1v586h-1z`;
    d += `M200 ${Math.round(91.4 + i * CELL)}h586v1h-586z`;
  }
  return d;
};

const Drawing = () => (
  <Canvas>
    <svg width="100%" height="100%" role="img" aria-label="DEM" shapeRendering="crispEdges">
      <defs>
        <pattern id="grid" x="54" y="86" width="146" height="146" patternUnits="userSpaceOnUse">
          <path d="M0 0h146v1H0zM0 0h1v146H0z" fill="#333" />
          {[29, 58, 87, 117].map(y =>
            [29, 58, 87, 117].map(x => <rect key={`${x}-${y}`} x={x} y={y} width="1" height="1" fill="#333" />)
          )}
        </pattern>
        <clipPath id="surface">
          <path d={outline} />
        </clipPath>
      </defs>
      <rect width="100%" height="100%" fill="url(#grid)" />
      <rect x="54" y="9" width="1" height="11" fill="#000" />
      <path d={outline} fill="#ff0" />
      <path d={meshLines()} clipPath="url(#surface)" fill="#000" />
      <path d="M18.500 641v45M24 691.500h45M14.500 686.500h9v9h-9zM18.500 686v5.500h5" stroke="#fff" fill="none" />
      <g fill="#fff" fontFamily="Open Sans" fontWeight="300" fontSize="19">
        <text x="21" y="638">Y</text>
        <text x="74" y="691">X</text>
      </g>
    </svg>
  </Canvas>
);

const Tools = ({ names }) =>
  names.map(name => (
    <ToolButton key={name} aria-label={name}>
      <Icon name={name} />
    </ToolButton>
  ));

const Select = ({ label, value, disabled }) => (
  <select aria-label={label} defaultValue={value} disabled={disabled}>
    <option>{value}</option>
  </select>
);

const Arrow = ({ d, color = '#666' }) => (
  <svg width="12" height="12" aria-hidden="true">
    <path d={d} fill={color} />
  </svg>
);

const TitleBar = () => (
  <Header>
    <LogoButton aria-label="AutoCAD">
      <Icon name="logo" w={27} h={24} />
      <Arrow d="M0 11h9l-4 4z" color="#333" />
    </LogoButton>
    <HeaderRows>
      <TitleRow>
        <QuickAccess>
          {['newFile', 'open', 'save', 'saveAs', 'print'].map(name => (
            <QuickButton key={name} $framed aria-label={name}>
              <Icon name={name} />
            </QuickButton>
          ))}
          <QuickButton aria-label="undo"><Icon name="undo" /></QuickButton>
          <QuickButton $width={18} aria-label="undo list"><Arrow d="M3 5h6l-3 3z" color="#333" /></QuickButton>
          <QuickButton aria-label="redo"><Icon name="redo" /></QuickButton>
          <QuickButton $width={18} aria-label="redo list"><Arrow d="M3 5h6l-3 3z" color="#333" /></QuickButton>
        </QuickAccess>
        <QuickSelect>
          <Icon name="gear" />
          <Select label="工作空间" value="AutoCAD 经典" />
          <Arrow d="M1 4h9l-5 5z" color="#333" />
        </QuickSelect>
        <QuickButton $width={18} aria-label="customize"><Arrow d="M1 3h10v1H1zM1 5h10l-5 5z" color="#000" /></QuickButton>
        <Caption>
          <span>SV360土地承包经营权调查专版（V2.0）</span>
          <span>Drawing1.dwg</span>
        </Caption>
        <QuickButton $width={12} aria-label="expand"><Arrow d="M4 2l5 5-5 5z" color="#000" /></QuickButton>
        <SearchBox aria-label="搜索" placeholder="键入关键" />
        <InputMethod>
          <Icon name="sogou" w={27} h={20} />
          <Spacer $size={4} />
          <span>中</span>
          {['moon', 'comma', 'keyboard', 'person', 'shirt', 'wrench'].map(name => (
            <Icon key={name} name={name} />
          ))}
        </InputMethod>
        <Login>
          <Icon name="user" />
          登录
        </Login>
        <Spacer $size={64} />
        <QuickButton $width={12} aria-label="more"><Arrow d="M3 6h7l-3 4z" color="#333" /></QuickButton>
      </TitleRow>
      <MenuBar>
        {menus.map(menu => (
          <button key={menu}>{menu}</button>
        ))}
      </MenuBar>
    </HeaderRows>
  </Header>
);

const ToolRibbon = () => (
  <Ribbon>
    <RibbonPanel>
      <RibbonTabs>
        <Spacer $size={3} />
        <RibbonTab>AutoCAD</RibbonTab>
        <TabDivider />
        <RibbonTab>测算工具</RibbonTab>
        <RibbonTab $active>快图工具</RibbonTab>
      </RibbonTabs>
      <ToolStrip>
        {toolGroups.map((names, i) => (
          <Fragment key={names[0]}>
            {i > 0 && <ToolDivider />}
            <Tools names={names} />
          </Fragment>
        ))}
      </ToolStrip>
    </RibbonPanel>
  </Ribbon>
);

const Properties = () => (
  <PropertyBar>
    <Grip $size={7} />
    <BarGroup>
      <Combo $width={174} $indent={8}>
        <Select label="工作空间" value="AutoCAD 经典" />
        <Icon name="chevron" />
      </Combo>
      <Tools names={['gear', 'workspace']} />
    </BarGroup>
    <Grip $size={9} />
    <BarGroup>
      <Tools names={['layerProps']} />
      <Combo $width={300} $indent={3} $tight>
        <Icon name="smallBulb" w={14} h={14} />
        <Icon name="smallSun" w={14} h={14} />
        <Icon name="smallVp" w={14} h={14} />
        <Icon name="smallLock" w={14} h={14} />
        <Icon name="smallBox" w={14} h={14} />
        <Select label="图层" value="0" />
        <Icon name="chevron" />
      </Combo>
      <Tools names={['layerA', 'layerB', 'layerC']} />
    </BarGroup>
    <Grip $size={9} />
    <BarGroup>
      <Combo $width={150} $indent={3} $mono>
        <Icon name="smallBox" w={12} h={14} />
        <Select label="颜色" value="ByLayer" />
        <Icon name="chevron" />
      </Combo>
      <BarDivider />
      <Combo $width={161} $mono>
        <ComboRule $size={60} />
        <Select label="线型" value="ByLayer" />
        <Icon name="chevron" />
      </Combo>
      <BarDivider />
      <Combo $width={125} $mono>
        <ComboRule $size={35} />
        <Select label="线宽" value="ByLayer" />
        <Icon name="chevron" />
      </Combo>
      <BarDivider />
      <Combo $width={119} $indent={8} $mono $disabled>
        <Select label="打印样式" value="ByColor" disabled />
        <Icon name="chevron" />
      </Combo>
    </BarGroup>
    <Grip $size={9} />
    <BarGroup $grow>
      <Tools names={drawTools} />
    </BarGroup>
  </PropertyBar>
);

const WorkPanel = () => (
  <Sidebar>
    <SidebarTitle>SV360工作空间</SidebarTitle>
    <SidebarBox>
      <ToolboxSelect>
        <Select label="工具箱" value="测量工具箱" />
        <Arrow d="M1 4h10l-5 5z" color="#fff" />
      </ToolboxSelect>
      <Accordion>
        <Group><GroupButton>地形处理</GroupButton></Group>
        <Group>
          <GroupButton>数字地模</GroupButton>
          <GroupScroll aria-label="up"><Arrow d="M1 9h10L6 4z" color="#999" /></GroupScroll>
        </Group>
        <TaskList>
          {tasks.map(([icon, name, tone]) => (
            <li key={name}>
              <Task $tone={tone}>
                <Icon name={icon} />
                {name}
              </Task>
            </li>
          ))}
        </TaskList>
        <Group>
          <GroupButton>图形分幅</GroupButton>
          <GroupScroll aria-label="down"><Arrow d="M1 4h10L6 9z" color="#999" /></GroupScroll>
        </Group>
        {['数据转换', '图像处理', '土地承包调查', '土地承包登记'].map(name => (
          <Group key={name}><GroupButton>{name}</GroupButton></Group>
        ))}
      </Accordion>
    </SidebarBox>
    <SidebarTabs>
      {sidebarTabs.map(([icon, name], i) => (
        <SidebarTab key={name} $active={i === 0}>
          <Icon name={icon} />
          {name}
        </SidebarTab>
      ))}
    </SidebarTabs>
  </Sidebar>
);

const CommandLine = () => (
  <CommandPanel>
    <CommandRail>
      <button aria-label="close"><Icon name="closeWhite" /></button>
      <button aria-label="options"><Icon name="spanner" /></button>
    </CommandRail>
    <CommandBody>
      <History>
        {history.map(line => (
          <HistoryLine key={line}>
            {line.split(/([\u3000-\u9fff]+)/).map((part, i) => (i % 2 ? <span key={i}>{part}</span> : part))}
          </HistoryLine>
        ))}
      </History>
      <Prompt>
        <Icon name="prompt" />
        <Arrow d="M3 4h7l-3 4z" color="#999" />
        <Spacer $size={6} />
        <input aria-label="命令" placeholder="键入命令" />
      </Prompt>
    </CommandBody>
  </CommandPanel>
);

const Status = () => (
  <StatusBar>
    <StatusText $width={178}>比例尺【1：500】编组【关】</StatusText>
    <StatusText $width={244} $coords>573197.3890, 4227292.5909, 0.0000</StatusText>
    {toggles.map(name => (
      <StatusToggle key={name} $width={toggleWidth(name)} $cjk={isCjk(name)} $on={name === '栅格'}>
        {name}
      </StatusToggle>
    ))}
    <Spacer />
    <StatusToggle $width={32} $cjk>模型</StatusToggle>
    <StatusToggle $width={22} $glyph aria-label="layout"><Icon name="layoutA" /></StatusToggle>
    <StatusToggle $width={22} $glyph aria-label="views"><Icon name="layoutB" /></StatusToggle>
  </StatusBar>
);

const App = () => (
  <>
    <GlobalStyle />
    <Window>
      <TitleBar />
      <ToolRibbon />
      <DocumentTabs>
        <DocumentTab>
          <svg width="148" height="23" aria-hidden="true">
            <path d="M0 22.500C7 21 6 3 10 1.500q2-1 4-1H126q4 0 7 3c4 5 4 17 14 19" fill="#ccc" stroke="#fff" />
          </svg>
          <button>Drawing1*</button>
          <button aria-label="close drawing"><Icon name="close" /></button>
        </DocumentTab>
        <button aria-label="new drawing"><Icon name="plus" w={26} h={18} /></button>
      </DocumentTabs>
      <Properties />
      <Workspace>
        <WorkPanel />
        <Stage>
          <Drawing />
          <LayoutTabs>
            <StepButton aria-label="first"><Arrow d="M2 1h1v10H2zM9 1v10L4 6z" /></StepButton>
            <StepButton aria-label="previous"><Arrow d="M8 1v10L3 6z" /></StepButton>
            <StepButton aria-label="next"><Arrow d="M4 1v10l5-5z" /></StepButton>
            <StepButton aria-label="last"><Arrow d="M9 1h1v10H9zM3 1v10l5-5z" /></StepButton>
            <LayoutTab $active>模型</LayoutTab>
            <LayoutTab>布局1</LayoutTab>
            <LayoutTab>布局2</LayoutTab>
            <Spacer />
            <ScrollTrack>
              <button aria-label="scroll left"><Arrow d="M8 2L3 6l5 5h2L6 6l4-4z" /></button>
            </ScrollTrack>
          </LayoutTabs>
          <CommandLine />
        </Stage>
      </Workspace>
      <Status />
    </Window>
  </>
);

export default App;
